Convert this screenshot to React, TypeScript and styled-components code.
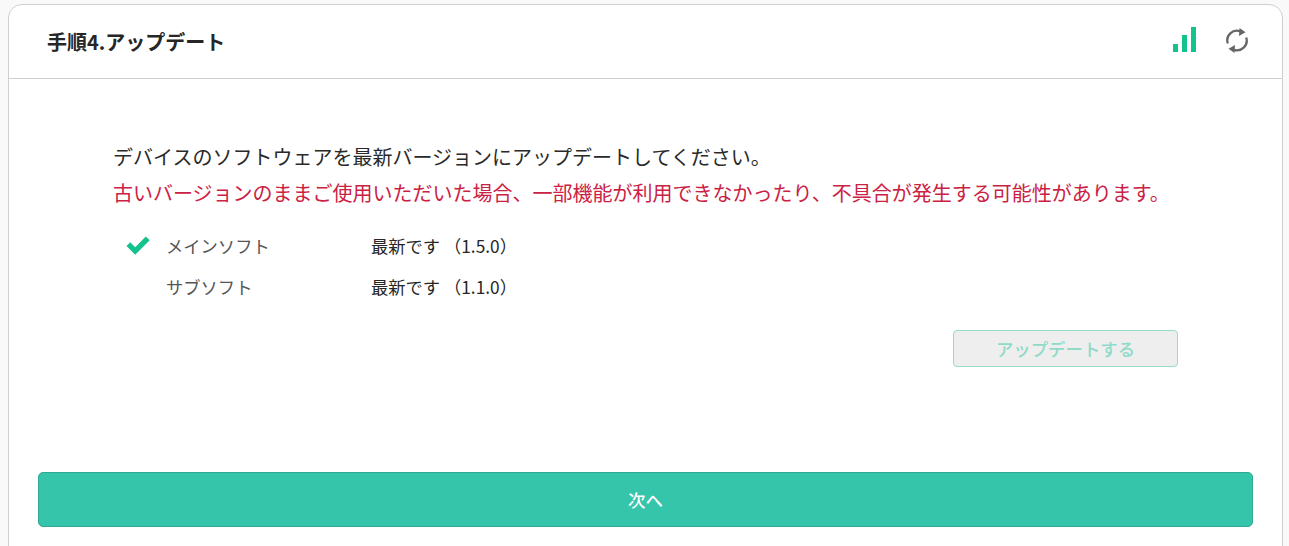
import React from "react";
import styled, { createGlobalStyle } from "styled-components";

const Global = createGlobalStyle`
  html, body { margin: 0; padding: 0; background: #f9f9f9; }
  body { font-family: "Noto Sans CJK JP", "Noto Sans", sans-serif; color: #212529; }
`;

const Page = styled.div`
  width: 1289px;
  height: 546px;
  overflow: hidden;
  padding: 4px 6px 0 8px;
  box-sizing: border-box;
`;

const Card = styled.main`
  background: #fff;
  border: 1px solid #cfcfcf;
  border-radius: 14px;
  height: 600px;
  box-sizing: border-box;
`;

const Header = styled.header`
  height: 74px;
  box-sizing: border-box;
  border-bottom: 1px solid #cfcfcf;
  display: flex;
  align-items: center;
  justify-content: space-between;
  padding: 0 33px 2px 38px;
`;

const Title = styled.h1`
  margin: 0;
  padding-top: 2px;
  font-size: 20px;
  font-weight: 700;
  line-height: 26px;
  color: #262626;
`;

const Icons = styled.div`
  display: flex;
  align-items: flex-start;
  gap: 29px;
`;

const Body = styled.div`
  padding: 60px 29px 0;
`;

const Content = styled.section`
  padding: 0 75px;
`;

const Lead = styled.p<{ $alert?: boolean }>`
  margin: 0;
  font-size: 20px;
  line-height: 36px;
  color: ${(p) => (p.$alert ? "#cb2143" : "#2a2a2a")};
  white-space: nowrap;
`;

const Rows = styled.div`
  margin-top: 14px;
  display: flex;
  flex-direction: column;
`;

const Row = styled.div`
  display: grid;
  grid-template-columns: 53px 205px auto;
  align-items: center;
  height: 41px;
  font-size: 17.3px;
`;

const CheckCell = styled.span`
  display: flex;
  padding-left: 13px;
`;

const Name = styled.span`
  color: #555;
`;

const Status = styled.span`
  color: #262626;
`;

const UpdateRow = styled.div`
  display: flex;
  justify-content: flex-end;
  margin-top: 23px;
`;

const UpdateButton = styled.button`
  width: 225px;
  height: 37px;
  border: 1px solid #96dccb;
  border-radius: 4px;
  background: #eeeeee;
  color: #8fdac8;
  font-family: inherit;
  font-size: 17.4px;
  font-weight: 500;
  padding: 0;
`;

const NextButton = styled.button`
  display: block;
  width: 100%;
  height: 55px;
  margin-top: 105px;
  border: 1px solid #2fa993;
  border-radius: 5px;
  background: #34c5ab;
  color: #fff;
  font-family: inherit;
  font-size: 17.4px;
  font-weight: 500;
  padding: 0;
`;

const SignalIcon = () => (
  <svg width="23" height="25" viewBox="0 0 23 25" fill="#13c28d" aria-hidden="true">
    <rect x="0" y="17" width="5" height="8" />
    <rect x="9" y="8" width="5" height="17" />
    <rect x="18" y="0" width="5" height="25" />
  </svg>
);

const SyncIcon = () => (
  <svg width="24" height="27" viewBox="0 0 24 27" fill="none" stroke="#666" strokeWidth="2.3" aria-hidden="true">
    <path d="M2.800 16.500A9.700 9.700 0 0 1 15.500 4.400" />
    <path d="M21.200 10.500A9.700 9.700 0 0 1 8.500 22.600" />
    <path d="M14.500 1 20.500 5.300 14 9z" fill="#666" stroke="none" />
    <path d="M9.500 26 3.500 21.700 10 18z" fill="#666" stroke="none" />
  </svg>
);

const CheckIcon = () => (
  <svg width="24" height="19" viewBox="0 0 24 19" aria-hidden="true">
    <path d="M.5 10 L4.200 6.300 L9.200 11.200 L19.800 .5 L23.700 4.300 L9.200 18.800 Z" fill="#13c28d" />
  </svg>
);

export default function App() {
  return (
    <Page>
      <Global />
      <Card>
        <Header>
          <Title>手順4.アップデート</Title>
          <Icons>
            <SignalIcon />
            <SyncIcon />
          </Icons>
        </Header>
        <Body>
          <Content>
            <Lead>デバイスのソフトウェアを最新バージョンにアップデートしてください。</Lead>
            <Lead $alert>古いバージョンのままご使用いただいた場合、一部機能が利用できなかったり、不具合が発生する可能性があります。</Lead>
            <Rows>
              <Row>
                <CheckCell><CheckIcon /></CheckCell>
                <Name>メインソフト</Name>
                <Status>最新です （1.5.0）</Status>
              </Row>
              <Row>
                <CheckCell />
                <Name>サブソフト</Name>
                <Status>最新です （1.1.0）</Status>
              </Row>
            </Rows>
            <UpdateRow>
              <UpdateButton disabled>アップデートする</UpdateButton>
            </UpdateRow>
          </Content>
          <NextButton>次へ</NextButton>
        </Body>
      </Card>
    </Page>
  );
}
